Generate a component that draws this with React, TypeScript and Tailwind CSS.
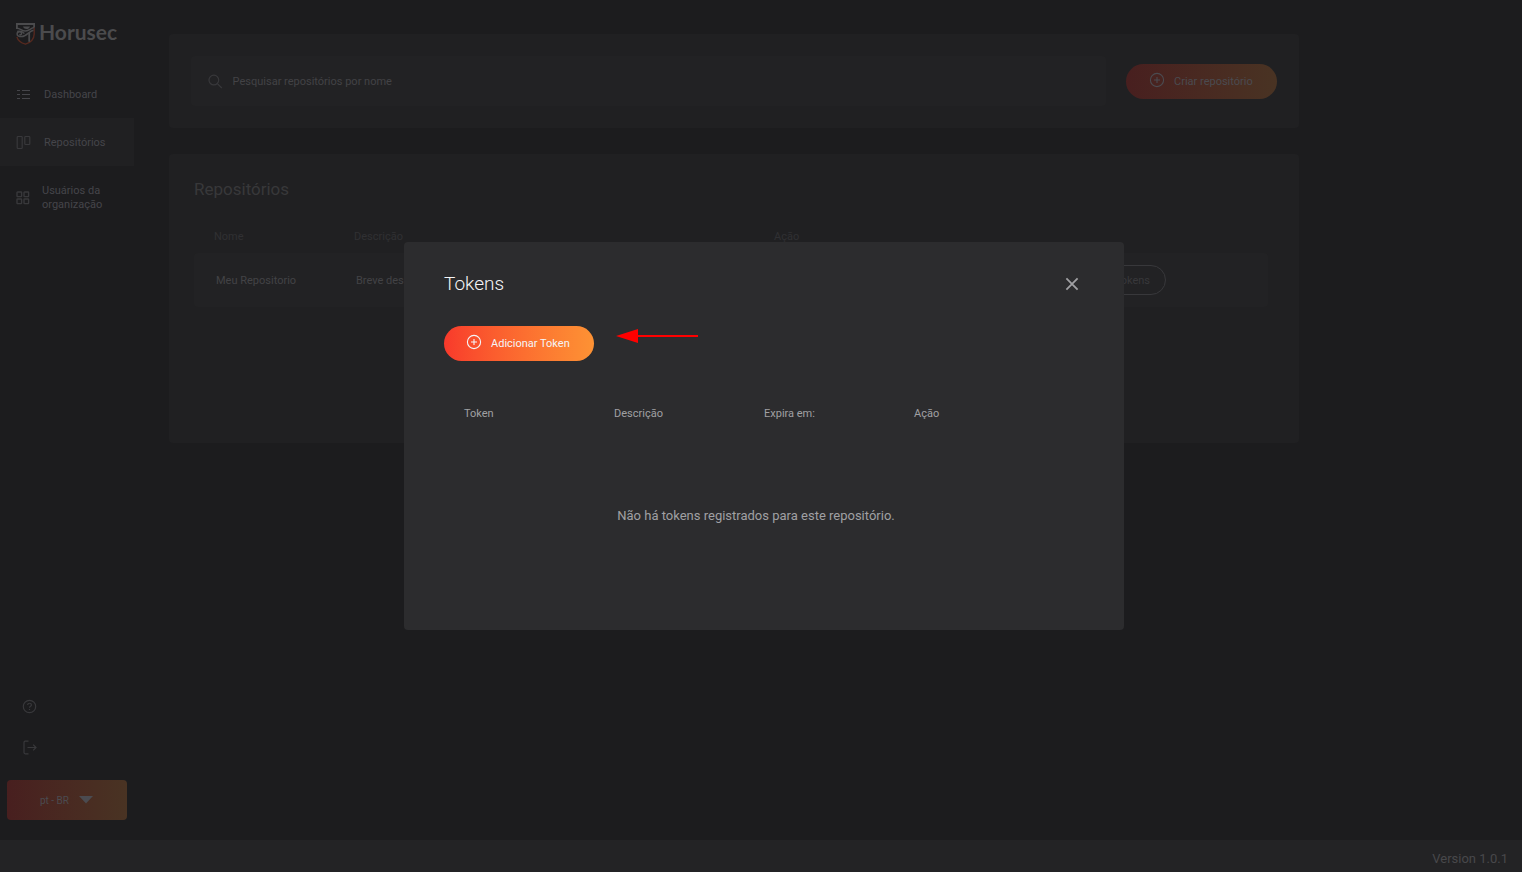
import React from "react";

function PlusCircle() {
  return (
    <svg viewBox="0 0 16 16" className="size-4 shrink-0" fill="none" stroke="currentColor" strokeWidth="1.1" aria-hidden="true">
      <circle cx="8" cy="8" r="6.6" />
      <path d="M8 5v6M5 8h6" />
    </svg>
  );
}

function Logo() {
  return (
    <div className="flex items-start gap-1 text-[#4b4b4d]">
      <svg viewBox="0 0 19 22" className="h-[22px] w-[19px]" fill="none" aria-hidden="true">
        <path d="M.9 13.8C1.8 17.600 5 19.800 9.5 21.200C14.500 19.600 18 16.800 18.200 11V3.500" stroke="#56291f" strokeWidth="1.4" />
        <path d="M0 1h19M.9 1v5M18.100 1v3.500" stroke="currentColor" strokeWidth="1.800" />
        <path d="M1 5.200C4.500 5.300 5.500 8 9.500 8S14 5.500 18 4.600" stroke="currentColor" strokeWidth="1.500" />
        <path d="M7 3.400h7c-.8 1.900-2 2.500-3.400 2.500S7.600 5.200 7 3.400Z" fill="currentColor" />
        <path d="M17.500 7.300C13 8 10.500 13.600 5.800 13.600c-2.600 0-4.700-.6-4.700-2.700 0-2.700 4.400-2.900 4.500-.4 0 1.200-1.400 1.500-2.200.9" stroke="currentColor" strokeWidth="1.500" />
        <path d="M1.200 8.400C4 7.600 6.200 8.400 8.400 10.400" stroke="currentColor" strokeWidth="1.400" />
        <path d="M13.200 10v8.800" stroke="currentColor" strokeWidth="1.800" />
      </svg>
      <span className="font-['Lato',sans-serif] text-[21px] leading-[18px] font-bold">Horusec</span>
    </div>
  );
}

function Sidebar() {
  return (
    <aside className="flex w-[134px] shrink-0 flex-col text-[#45454a]">
      <div className="pt-[23px] pl-4">
        <Logo />
      </div>
      <nav className="mt-[25px] text-[11px]">
        <a href="#dashboard" className="flex h-12 items-center gap-[13px] pl-4">
          <svg viewBox="0 0 15 15" className="size-[15px]" stroke="currentColor" strokeWidth="1.200" aria-hidden="true">
            <path d="M1 3.500h3M6 3.500h8M1 7.500h3M6 7.500h8M1 11.500h3M6 11.500h8" />
          </svg>
          <span className="pt-0.5">Dashboard</span>
        </a>
        <a href="#repositorios" className="flex h-12 items-center gap-[13px] bg-[#202022] pl-4">
          <svg viewBox="0 0 15 15" className="size-[15px]" fill="none" stroke="#38383b" strokeWidth="1.200" aria-hidden="true">
            <rect x="1.200" y="1.500" width="5" height="12" rx=".8" />
            <rect x="8.800" y="1.500" width="5" height="8" rx=".8" />
          </svg>
          <span className="pt-0.5">Repositórios</span>
        </a>
        <a href="#usuarios" className="flex items-center gap-3 pt-[18px] pl-4 leading-[14px]">
          <svg viewBox="0 0 14 14" className="size-[14px] shrink-0" fill="none" stroke="#38383b" strokeWidth="1.400" aria-hidden="true">
            <rect x="1" y="1" width="4.600" height="4.600" rx=".6" />
            <rect x="8" y="1" width="4.600" height="4.600" rx=".6" />
            <rect x="1" y="8" width="4.600" height="4.600" rx=".6" />
            <rect x="8" y="8" width="4.600" height="4.600" rx=".6" />
          </svg>
          <span>
            Usuários da
            <br />
            organização
          </span>
        </a>
      </nav>
      <div className="mt-auto flex flex-col items-start gap-[26px] pl-[22px] text-[#38383b]">
        <button type="button" aria-label="Ajuda">
          <svg viewBox="0 0 15 15" className="size-[15px]" fill="none" stroke="currentColor" strokeWidth="1.200" aria-hidden="true">
            <circle cx="7.500" cy="7.500" r="6.200" />
            <path d="M5.700 6c0-2.400 3.700-2.300 3.700-.1 0 1.400-1.900 1.300-1.900 2.800M7.500 9.900v1.200" />
          </svg>
        </button>
        <button type="button" aria-label="Sair">
          <svg viewBox="0 0 15 15" className="size-[15px]" fill="none" stroke="currentColor" strokeWidth="1.200" aria-hidden="true">
            <path d="M6.500 1.200H3.200c-.8 0-1.200.4-1.200 1.200v10.200c0 .8.400 1.200 1.200 1.200h3.300M5.500 7.500H14M11.200 4.700 14 7.500l-2.800 2.800" />
          </svg>
        </button>
      </div>
      <div className="relative mx-[7px] mt-[25px] mb-5">
        <select
          aria-label="Idioma"
          className="h-10 w-full appearance-none rounded bg-linear-to-r from-[#481f1f] to-[#493323] pl-[33px] text-[10px] text-[#4b4b50] outline-none"
        >
          <option>pt - BR</option>
        </select>
        <svg viewBox="0 0 14 8" className="pointer-events-none absolute top-4 left-[72px] h-2 w-3.5" fill="#4b4b50" aria-hidden="true">
          <path d="M0 0h14L7 7.500Z" />
        </svg>
      </div>
    </aside>
  );
}

function Repositories() {
  return (
    <main className="mt-[34px] mr-[223px] ml-[35px] flex min-w-0 flex-1 flex-col gap-[26px] self-start">
      <section className="flex items-center gap-5 rounded bg-[#202022] px-[22px] py-[22px]">
        <label className="flex h-[50px] flex-1 items-center gap-2.5 rounded bg-[#222224] pl-[17px]">
          <svg viewBox="0 0 15 15" className="size-[15px]" fill="none" stroke="#38383b" strokeWidth="1.200" aria-hidden="true">
            <circle cx="6" cy="6" r="5" />
            <path d="m9.600 9.600 4.600 4.600" />
          </svg>
          <input
            type="text"
            aria-label="Pesquisar repositórios por nome"
            placeholder="Pesquisar repositórios por nome"
            className="w-full bg-transparent pt-0.5 text-[11px] text-[#434346] outline-none placeholder:text-[#434346]"
          />
        </label>
        <button
          type="button"
          className="flex h-[35px] w-[151px] items-start gap-[9px] rounded-full bg-linear-to-r from-[#481f1f] to-[#493323] pt-2 pl-[23px] text-[11px] leading-5 text-[#4b4b50]"
        >
          <PlusCircle />
          Criar repositório
        </button>
      </section>

      <section className="h-[289px] rounded bg-[#202022] pt-[25px] pr-[31px] pl-[25px]">
        <h1 className="text-[17px] leading-5 text-[#38383a]">Repositórios</h1>
        <table className="mt-7 w-full table-fixed border-separate border-spacing-0 text-left text-[11px]">
          <thead className="text-[#303033]">
            <tr className="h-[26px] align-top leading-5">
              <th className="w-[140px] pl-5 font-normal">Nome</th>
              <th className="w-[420px] pl-5 font-normal">Descrição</th>
              <th className="pl-5 font-normal">Ação</th>
            </tr>
          </thead>
          <tbody className="text-[#434346]">
            <tr className="h-[54px]">
              <td className="rounded-l bg-[#222224] pt-0.5 pl-[22px]">Meu Repositorio</td>
              <td className="bg-[#222224] pt-0.5 pl-[22px]">Breve descrição</td>
              <td className="rounded-r bg-[#222224] pr-[102px]">
                <button
                  type="button"
                  className="ml-auto flex h-[30px] items-center rounded-full border border-[#38383b] px-[15px] pt-0.5 text-[#38383b]"
                >
                  Tokens
                </button>
              </td>
            </tr>
          </tbody>
        </table>
      </section>
    </main>
  );
}

function TokensDialog() {
  return (
    <div className="absolute inset-0 flex items-center justify-center pl-1.5">
      <div role="dialog" aria-modal="true" aria-labelledby="tokens-title" className="w-[720px] rounded bg-[#2c2c2e] pt-7 pr-11 pb-[104px] pl-10 text-[#a0a0a3]">
        <div className="flex items-center justify-between">
          <h2 id="tokens-title" className="text-[19px] leading-7 font-light text-[#f5f5f7]">
            Tokens
          </h2>
          <button type="button" aria-label="Fechar">
            <svg viewBox="0 0 16 16" className="size-4" stroke="currentColor" strokeWidth="1.800" aria-hidden="true">
              <path d="m2.400 2.400 11.200 11.200M13.600 2.400 2.400 13.600" />
            </svg>
          </button>
        </div>
        <div className="mt-7 flex items-start gap-[22px]">
          <button
            type="button"
            className="flex h-[35px] w-[150px] items-start gap-[9px] rounded-full bg-linear-to-r from-[#f8392b] to-[#fd9234] pt-2 pl-[22px] text-[11px] leading-5 text-[#f5f5f7]"
          >
            <PlusCircle />
            Adicionar Token
          </button>
          <svg viewBox="0 0 82 14" className="mt-[3px] h-3.5 w-[82px]" fill="#ff0000" aria-hidden="true">
            <path d="M0 7 22 0v6h60v2H22v6Z" />
          </svg>
        </div>
        <table className="mt-[45px] w-[600px] table-fixed text-left text-[11px] leading-4">
          <thead>
            <tr>
              <th className="pl-5 font-normal">Token</th>
              <th className="pl-5 font-normal">Descrição</th>
              <th className="pl-5 font-normal">Expira em:</th>
              <th className="pl-5 font-normal">Ação</th>
            </tr>
          </thead>
        </table>
        <p className="mt-[84px] pr-3 text-center text-[13px] leading-5">Não há tokens registrados para este repositório.</p>
      </div>
    </div>
  );
}

export default function App() {
  return (
    <div className="relative flex min-h-[calc(100vh-1px)] flex-col bg-[#1c1c1e] font-['Roboto',sans-serif]">
      <div className="flex flex-1">
        <Sidebar />
        <Repositories />
      </div>
      <footer className="flex h-8 items-center justify-end bg-[#232325] pt-1.5 pr-3.5 text-[13px] text-[#48484b]">Version 1.0.1</footer>
      <TokensDialog />
    </div>
  );
}
